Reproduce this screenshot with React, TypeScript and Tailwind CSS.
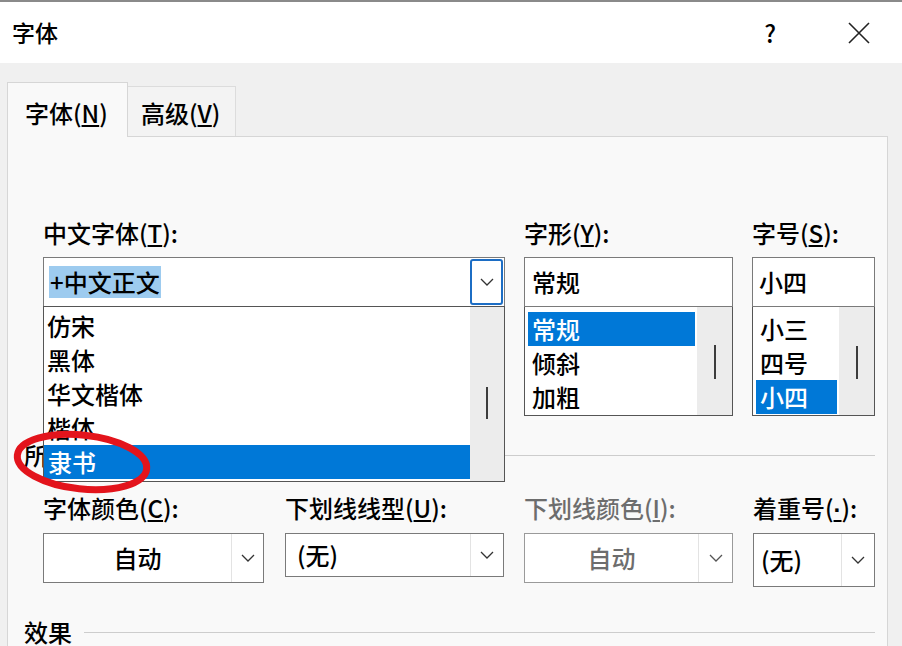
import React from "react";

// Word 字体 dialog, 中文字体 dropdown opened, 隶书 circled

function Chevron({ muted = false }: { muted?: boolean }) {
  return (
    <svg width="14" height="8" viewBox="0 0 14 8" className="block">
      <path d="M1 1l6 6 6-6" fill="none" stroke={muted ? "#555" : "#333"} strokeWidth="1.3" />
    </svg>
  );
}

function Thumb({ className }: { className: string }) {
  return <div className={"w-[2px] bg-[#3c3c3c] " + className} />;
}

type ComboProps = {
  className: string;
  text: string;
  center?: boolean;
  disabled?: boolean;
  dropClass: string;
  textClass?: string;
};

function Combo({ className, text, center, disabled, dropClass, textClass = "" }: ComboProps) {
  return (
    <div className={"flex bg-white border " + (disabled ? "border-[#9a9a9a] " : "border-[#7a7a7a] ") + className}>
      <div
        className={
          "flex-1 flex items-center leading-[30px] " +
          (center ? "justify-center " : "") +
          (disabled ? "text-[#6d6d6d] " : "text-black ") +
          textClass
        }
      >
        {text}
      </div>
      <div className={"flex items-center justify-center border-l border-[#e3e3e3] " + dropClass}>
        <Chevron muted={disabled} />
      </div>
    </div>
  );
}

const fonts = ["仿宋", "黑体", "华文楷体", "楷体", "隶书"];
const styles = ["常规", "倾斜", "加粗"];
const sizes = ["小三", "四号", "小四"];

export default function App() {
  return (
    <div className="relative w-[902px] h-[646px] overflow-hidden bg-[#f0f0f0] text-black text-[24px] font-medium font-['Noto_Sans_CJK_SC',sans-serif]">
      {/* window edge above */}
      <div className="h-[3px] bg-white border-t-2 border-[#8a8a8a]" />

      {/* title bar */}
      <div className="h-[60px] bg-white flex items-center pl-[12px] pr-[32px]">
        <span className="text-[23px] leading-[30px] -mt-[2px]">字体</span>
        <span className="ml-auto text-[24px] leading-[30px] mr-[72px]">?</span>
        <svg width="22" height="22" viewBox="0 0 22 22" className="block">
          <path d="M1 1l20 20M21 1L1 21" stroke="#222" strokeWidth="1.6" />
        </svg>
      </div>

      {/* tabs */}
      <div className="h-[73px] flex items-end pl-[7px]">
        <div className="relative z-10 -mb-px w-[121px] h-[55px] bg-[#f9f9f9] border border-b-0 border-[#d6d6d6] pl-[17px] pt-[15px] leading-[30px]">
          字体(<u>N</u>)
        </div>
        <div className="w-[108px] h-[50px] bg-[#f3f3f3] border border-b-0 border-l-0 border-[#dcdcdc] pl-[13px] pt-[11px] leading-[30px]">
          高级(<u>V</u>)
        </div>
      </div>

      {/* panel */}
      <div className="ml-[7px] w-[881px] h-[520px] bg-[#f9f9f9] border border-[#d6d6d6] pt-[81px] pl-[35px]">
        <div className="w-[832px]">
          {/* labels */}
          <div className="flex h-[30px] leading-[30px]">
            <div className="w-[481px]">中文字体(<u>T</u>):</div>
            <div className="w-[228px]">字形(<u>Y</u>):</div>
            <div>字号(<u>S</u>):</div>
          </div>

          {/* inputs + lists */}
          <div className="flex items-start mt-[9px]">
            <div className="relative w-[462px] mr-[19px]">
              <div className="h-[50px] flex bg-white border border-[#7a7a7a]">
                <div className="flex-1 flex items-center pl-[5px]">
                  <span className="bg-[#9dcbef] leading-[32px] px-[1px]">+中文正文</span>
                </div>
                <div className="w-[33px] my-px mr-px flex items-center justify-center border-2 border-[#1c6dc4] rounded-[3px] bg-white">
                  <Chevron />
                </div>
              </div>
              {/* opened dropdown */}
              <div className="absolute z-20 left-0 top-[49px] w-[462px] h-[176px] flex bg-white border border-[#555]">
                <div className="flex-1 pt-[2px]">
                  {fonts.map((f, i) => (
                    <div
                      key={f}
                      className={
                        "h-[34px] leading-[34px] pl-[3px] " +
                        (i === 4 ? "bg-[#0078d7] text-white pl-[4px]" : "")
                      }
                    >
                      {f}
                    </div>
                  ))}
                </div>
                <div className="w-[34px] bg-[#ececec] flex justify-center pt-[80px]">
                  <Thumb className="h-[32px]" />
                </div>
              </div>
            </div>

            <div className="w-[209px] mr-[19px]">
              <div className="h-[50px] flex items-center bg-white border border-[#7a7a7a] pl-[7px]">常规</div>
              <div className="h-[109px] flex bg-white border border-t-0 border-[#555]">
                <div className="flex-1 pt-[5px] pl-[3px] pr-[2px]">
                  {styles.map((s, i) => (
                    <div
                      key={s}
                      className={"h-[34px] leading-[34px] pl-[4px] " + (i === 0 ? "bg-[#0078d7] text-white" : "")}
                    >
                      {s}
                    </div>
                  ))}
                </div>
                <div className="w-[35px] bg-[#ececec] flex justify-center pt-[38px]">
                  <Thumb className="h-[34px]" />
                </div>
              </div>
            </div>

            <div className="w-[123px]">
              <div className="h-[50px] flex items-center bg-white border border-[#7a7a7a] pl-[6px]">小四</div>
              <div className="h-[109px] flex bg-white border border-t-0 border-[#555]">
                <div className="flex-1 pt-[5px] pl-[3px] pr-[2px]">
                  {sizes.map((s, i) => (
                    <div
                      key={s}
                      className={"h-[34px] leading-[34px] pl-[4px] " + (i === 2 ? "bg-[#0078d7] text-white" : "")}
                    >
                      {s}
                    </div>
                  ))}
                </div>
                <div className="w-[35px] bg-[#ececec] flex justify-center pt-[39px]">
                  <Thumb className="h-[33px]" />
                </div>
              </div>
            </div>
          </div>

          {/* 所有文字 */}
          <div className="-ml-[19px] mt-[24px] h-[30px] flex items-center leading-[30px]">
            <span>所有文字</span>
            <div className="flex-1 h-px bg-[#cdcdcd] ml-[10px]" />
          </div>

          {/* labels row 2 */}
          <div className="flex h-[30px] leading-[30px] mt-[23px]">
            <div className="w-[242px]">字体颜色(<u>C</u>):</div>
            <div className="w-[239px]">下划线线型(<u>U</u>):</div>
            <div className="w-[229px] text-[#6d6d6d]">下划线颜色(<u>I</u>):</div>
            <div>
              着重号(<u className="leading-none font-bold font-['Liberation_Sans',sans-serif]">·</u>):
            </div>
          </div>

          <div className="flex items-start mt-[10px]">
            <Combo className="w-[221px] h-[50px] mr-[21px]" text="自动" center dropClass="w-[32px]" />
            <Combo className="w-[219px] h-[44px] mr-[20px]" text="(无)" dropClass="w-[33px]" textClass="pl-[11px]" />
            <Combo className="w-[209px] h-[50px] mr-[20px]" text="自动" center disabled dropClass="w-[34px]" />
            <Combo className="w-[122px] h-[54px]" text="(无)" dropClass="w-[33px]" textClass="pl-[7px]" />
          </div>

          {/* 效果 */}
          <div className="-ml-[19px] mt-[30px] h-[30px] flex items-center leading-[30px]">
            <span>效果</span>
            <div className="flex-1 h-px bg-[#cdcdcd] ml-[12px]" />
          </div>
        </div>
      </div>

      {/* red hand-drawn circle around 隶书 */}
      <svg className="absolute left-[8px] top-[415px] z-30" width="160" height="95" viewBox="0 0 160 95">
        <ellipse
          cx="74"
          cy="47"
          rx="65"
          ry="27"
          transform="rotate(6 74 47)"
          fill="none"
          stroke="#e3141c"
          strokeWidth="7"
        />
      </svg>
    </div>
  );
}
